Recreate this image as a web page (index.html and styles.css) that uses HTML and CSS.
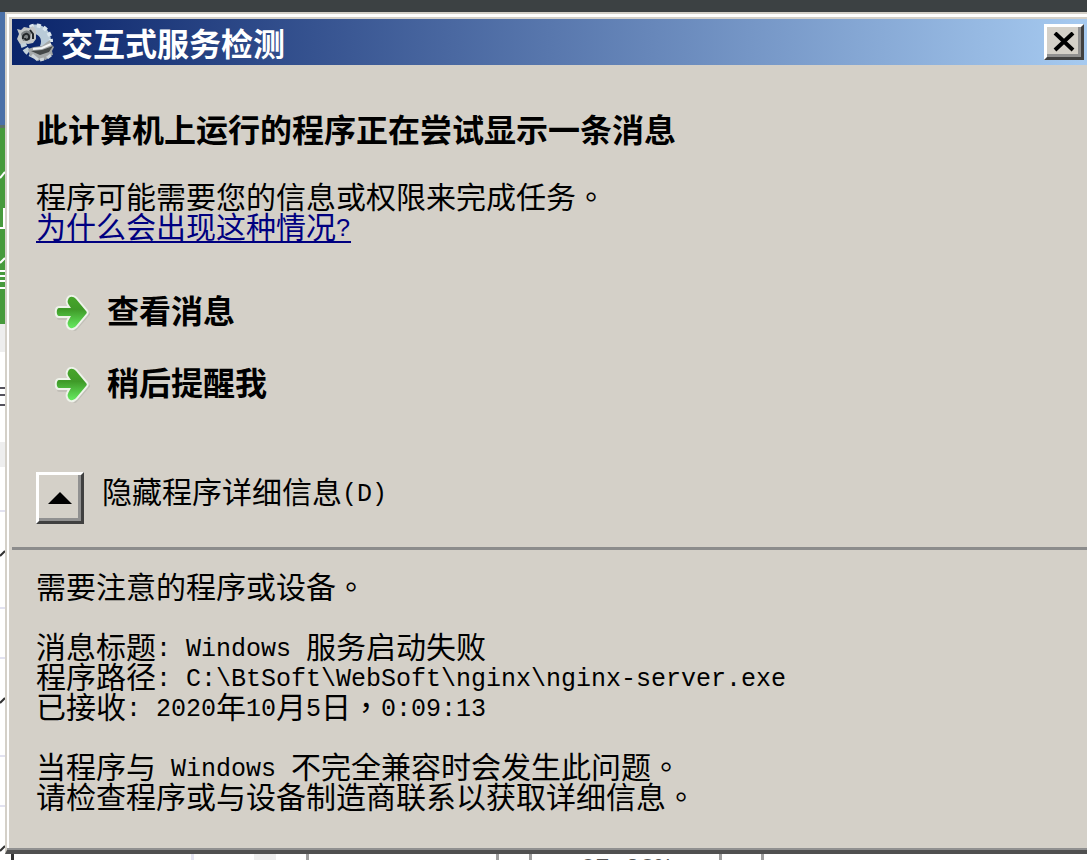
FILE: index.html
```
<!DOCTYPE html>
<html lang="zh-CN">
<head>
  <meta charset="UTF-8" />
  <meta name="viewport" content="width=device-width, initial-scale=1.0"/>
  <title>交互式服务检测</title>
  <link rel="stylesheet" href="styles.css">
</head>
<body>
  <div class="topbar"></div>

  <div class="stage">
    <!-- sliver of the page behind the dialog -->
    <svg class="behind" width="5" height="842" viewBox="0 12 5 842" aria-hidden="true">
      <rect y="12" width="5" height="115" fill="#4a70a8"/>
      <rect y="125" width="5" height="3" fill="#5d7069"/>
      <rect y="128" width="5" height="196" fill="#479a3c"/>
      <rect y="324" width="5" height="28" fill="#eee"/>
      <rect y="442" width="5" height="25" fill="#eee"/>
      <path d="M0 178l5-6M4 208v20H0M0 263l5-5M0 271h5M0 276h5M0 281h5M0 288h5" stroke="#fff" stroke-width="2" fill="none"/>
      <path d="M0 388h5M0 395h5M0 405h5" stroke="#55525c" stroke-width="2"/>
      <path d="M0 511h5M0 608h5M0 658h5M0 756h5M0 806h5" stroke="#e2e2f0" stroke-width="2"/>
      <path d="M0 556l5-5M0 703l5-5M0 851l5-5" stroke="#333" stroke-width="2"/>
    </svg>

    <div class="dialog" role="dialog" aria-labelledby="title">
      <div class="titlebar">
        <svg class="gears" width="40" height="40" viewBox="0 0 40 40" aria-hidden="true">
          <path d="M13 4c10-5 22 2 22 15l-5 8-6-3c3-7-1-13-8-12z" fill="#b9cbd8"/>
          <path d="M14 5c10-5 21 3 21 15" fill="none" stroke="#dbe7ee" stroke-width="4" stroke-dasharray="4 3"/>
          <path d="M7 20c1 8 6 12 13 14" fill="none" stroke="#c3d1da" stroke-width="6" stroke-dasharray="5 2"/>
          <path d="M1 7l4 1 3-3 5 1 4-2 3 4v9l-3 4-5 1-4-1-4 1-3-5 2-5z" fill="#c4c7c7"/>
          <path d="M5 12c2-4 8-5 10-1l-1 7-7 1z" fill="#7d8283"/>
          <path d="M7 17c-1-5 5-7 6-3s-4 5-4 2M14 8l3 4v5" fill="none" stroke="#24282a" stroke-width="2"/>
          <path d="M12 27l6-2 8-1 5-4 3-2 1 4 3 3-2 4 1 4-4 1-3 4-4-1-4 2-3-4-5-1z" fill="#a5a9a9"/>
          <path d="M15 29l11-1 11-4-4 6-9 3z" fill="#454949"/>
          <path d="M17 27l9-1 9-4" fill="none" stroke="#f4f6f6" stroke-width="2"/>
          <path d="M16 33l6 5M24 38l4-1M31 36l4-3" stroke="#cfd6d9" stroke-width="3"/>
        </svg>
        <h1 id="title">交互式服务检测</h1>
        <button class="close" aria-label="关闭">
          <svg width="22" height="20" viewBox="0 0 22 20"><path d="M2 1l18 17M20 1L2 18" stroke="#000" stroke-width="4"/></svg>
        </button>
      </div>

      <div class="content">
        <h2>此计算机上运行的程序正在尝试显示一条消息</h2>
        <p>程序可能需要您的信息或权限来完成任务<span class="punct" lang="zh-TW">。</span><br>
        <a href="#">为什么会出现这种情况<span class="half">?</span></a></p>

        <div class="commands">
          <button class="command">
            <svg width="36" height="38" viewBox="0 0 36 38"><use href="#arrow"/></svg>
            查看消息
          </button>
          <button class="command">
            <svg width="36" height="38" viewBox="0 0 36 38"><use href="#arrow"/></svg>
            稍后提醒我
          </button>
        </div>

        <div class="toggle">
          <button id="details" class="toggle-btn" aria-expanded="true">
            <svg width="24" height="12" viewBox="0 0 24 12"><path d="M12 0l12 12H0z"/></svg>
          </button>
          <label for="details">隐藏程序详细信息<span class="half">(D)</span></label>
        </div>
      </div>

      <hr>

      <div class="details">
        <p>需要注意的程序或设备<span class="punct" lang="zh-TW">。</span></p>
        <p>消息标题<span class="half">: Windows </span>服务启动失败<br>
        程序路径<span class="half">: C:\BtSoft\WebSoft\nginx\nginx-server.exe</span><br>
        已接收<span class="half">: 2020</span>年<span class="half">10</span>月<span class="half">5</span>日<span class="punct" lang="zh-TW">，</span><span class="half">0:09:13</span></p>
        <p>当程序与<span class="half"> Windows </span>不完全兼容时会发生此问题<span class="punct" lang="zh-TW">。</span><br>
        请检查程序或与设备制造商联系以获取详细信息<span class="punct" lang="zh-TW">。</span></p>
      </div>
    </div>
  </div>

  <div class="cells">
    <span class="cell first"></span>
    <span class="cell wide"></span>
    <span class="cell mid"></span>
    <span class="cell gap"></span>
    <span class="cell value">67.28%</span>
    <span class="cell last"></span>
  </div>

  <svg width="0" height="0" class="defs" aria-hidden="true">
    <defs>
      <linearGradient id="green" x1="0" y1="0" x2="0" y2="1">
        <stop offset="0" stop-color="#47a52b"/>
        <stop offset="0.4" stop-color="#3f9a28"/>
        <stop offset="1" stop-color="#66ea60"/>
      </linearGradient>
      <g id="arrow">
        <path d="M17 6l4-1 13 14-13 15-5-2 2-9H5v-6h12z" fill="#bbb8b1" stroke="#c2bfb8" stroke-width="4" stroke-linejoin="round"/>
        <path d="M14 5c1-4 5-4 8-1l10 12c1 1 1 2 0 3L22 31c-3 3-7 3-8-1-1-2 0-4 3-9H5c-3 0-3-8 0-8h12c-3-4-4-6-3-8z" fill="#eef3ea" stroke="#eef3ea" stroke-width="4"/>
        <path d="M14 5c1-4 5-4 8-1l10 12c1 1 1 2 0 3L22 31c-3 3-7 3-8-1-1-2 0-4 3-9H5c-3 0-3-8 0-8h12c-3-4-4-6-3-8z" fill="url(#green)"/>
      </g>
    </defs>
  </svg>
</body>
</html>
```
FILE: styles.css
```
* {
  box-sizing: border-box;
}

body {
  margin: 0;
  background: #fff;
  color: #000;
  font-family: "Noto Sans CJK SC", sans-serif;
  font-size: 30px;
  line-height: 30px;
  overflow: hidden;
}

h1, h2, p {
  margin: 0;
}

button {
  padding: 0;
  color: inherit;
  font: inherit;
  cursor: pointer;
}

.topbar {
  height: 12px;
  background: #3c4143;
}

.stage {
  display: grid;
  grid-template-columns: 5px 1fr;
}

.behind {
  display: block;
}

/* classic raised window, the right edge runs off screen */
.dialog {
  padding: 7px 0 32px 5px;
  background-color: #d4d0c8;
  background-image: linear-gradient(#fff, #fff), linear-gradient(#fff, #fff);
  background-size: 2px 100%, 100% 3px;
  background-position: 0 2px, 0 2px;
  background-repeat: no-repeat;
  border-left: 2px solid #d4d0c8;
  border-bottom: 4px solid #505050;
  box-shadow: inset 0 -2px #909090;
}

.titlebar {
  display: flex;
  align-items: center;
  height: 46px;
  padding: 0 3px 0 4px;
  background: linear-gradient(to right, #0a246a, #a6caf0);
  color: #fff;
}

.titlebar h1 {
  flex: 1;
  margin-left: 5px;
  font-size: 32px;
  font-weight: 700;
  line-height: 36px;
}

.close, .toggle-btn {
  display: flex;
  align-items: center;
  justify-content: center;
  background: #d4d0c8;
  border: 3px solid;
  border-color: #fff #404040 #404040 #fff;
  box-shadow: inset -3px -3px #909090;
}

.close {
  width: 40px;
  height: 36px;
}

.content {
  padding: 45px 24px 23px;
}

h2 {
  margin-bottom: 34px;
  font-size: 32px;
  font-weight: 700;
  line-height: 36px;
}

a {
  color: #000080;
  text-decoration: underline;
  text-decoration-thickness: 2px;
  text-underline-offset: 3px;
}

/* latin letters take half the width of a chinese one */
.half {
  font-family: "Liberation Mono", monospace;
  font-size: 25px;
  line-height: 0;
  vertical-align: 2px;
  white-space: pre;
}

/* full stop and comma sit in the middle of their square */
.punct {
  font-family: "Noto Sans CJK TC", sans-serif;
  line-height: 0;
}

.commands {
  display: flex;
  flex-direction: column;
  align-items: flex-start;
  gap: 36px;
  margin: 51px 0 73px 18px;
}

.command {
  display: flex;
  align-items: center;
  gap: 17px;
  height: 36px;
  background: none;
  border: 0;
  font-size: 32px;
  font-weight: 700;
  line-height: 36px;
}

.command svg {
  margin-top: 10px;
}

.toggle {
  display: flex;
  gap: 18px;
}

.toggle label {
  line-height: 36px;
}

.toggle-btn {
  width: 48px;
  height: 52px;
}

hr {
  height: 3px;
  margin: 0;
  border: 0;
  background: #8c8c8c;
}

.details {
  display: flex;
  flex-direction: column;
  gap: 30px;
  padding: 20px 24px 0;
}

.cells {
  display: flex;
  height: 6px;
  padding-left: 11px;
  overflow: hidden;
}

.cell {
  border-left: 3px solid #a0a0a0;
}

.first {
  width: 180px;
  border-color: #333;
}

.wide {
  width: 115px;
  border-color: #e6e6f4;
  background: linear-gradient(#eee, #eee) 60px 0 / 22px 100% no-repeat;
}

.mid {
  width: 190px;
}

.gap {
  width: 33px;
}

.value {
  width: 190px;
  padding: 3px 0 0 48px;
  color: #555;
  font-family: "Liberation Mono", monospace;
  font-size: 25px;
  line-height: 25px;
}

.last {
  width: 45px;
  border-right: 3px solid #a0a0a0;
}

.defs {
  display: block;
}
```
